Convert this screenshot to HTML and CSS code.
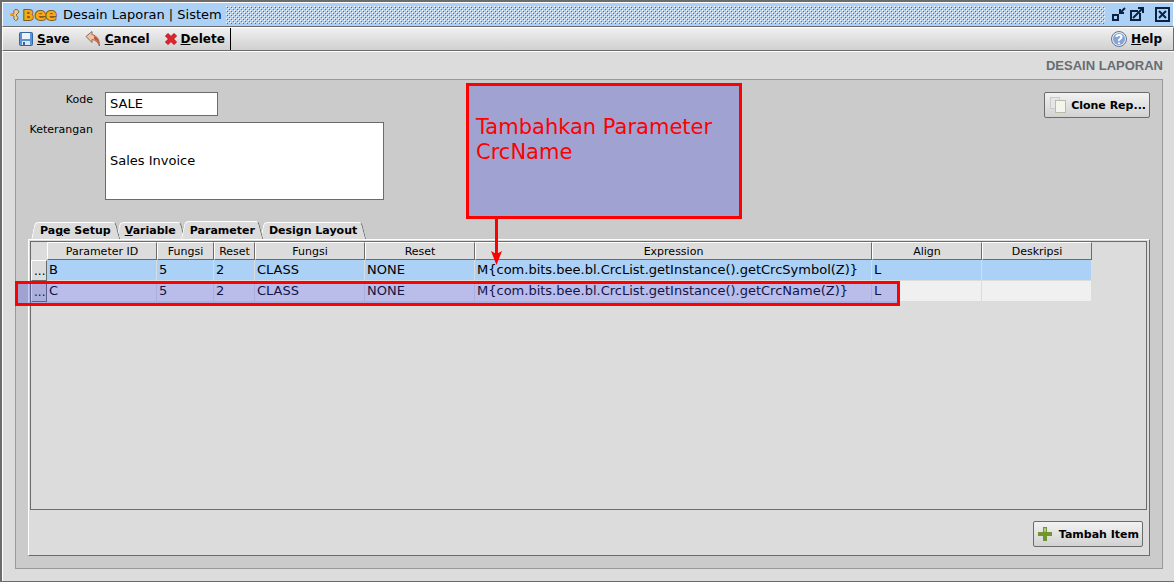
FILE: index.html
```html
<!DOCTYPE html>
<html lang="id">
<head>
  <meta charset="UTF-8">
  <meta name="viewport" content="width=device-width, initial-scale=1.0">
  <title>Desain Laporan | Sistem</title>
  <link rel="stylesheet" href="styles.css">
</head>
<body>

<div class="window">
  <header class="titlebar">
    <svg class="logo" width="52" height="18" viewBox="0 0 52 18">
      <path d="M10 6Q9 2.500 6 3.500Q4 4.500 5 7.500L1.500 8.500L5 10Q4 13.500 6.500 14.500Q9 14.500 9 11.500L7 9Z" fill="#f7c98a" stroke="#7d6a48"/>
      <path d="M1 8.500H5" stroke="#f59a12" stroke-width="2"/>
      <text class="logo-b" x="14" y="14">B</text>
      <text class="logo-e" x="26" y="14">ee</text>
    </svg>
    <h1>Desain Laporan | Sistem</h1>
    <div class="bumps"></div>
    <div class="window-buttons">
      <button aria-label="Minimize">
        <svg width="15" height="15" viewBox="0 0 15 15" fill="none" stroke="#0b2240" stroke-width="2">
          <path d="M2 8H7V13H2Z"/><path d="M14 1L9 6M9 2V6H13"/>
        </svg>
      </button>
      <button aria-label="Maximize">
        <svg width="15" height="15" viewBox="0 0 15 15" fill="none" stroke="#0b2240" stroke-width="2">
          <path d="M9 4H2V13H11V6"/><path d="M4 11L13 2M9 1H14V6"/>
        </svg>
      </button>
      <button class="close" aria-label="Close">
        <svg width="15" height="15" viewBox="0 0 15 15" fill="none" stroke="#0b2240" stroke-width="2">
          <path d="M1 1H14V14H1Z"/><path d="M4 4L11 11M11 4L4 11"/>
        </svg>
      </button>
    </div>
  </header>

  <nav class="toolbar">
    <div class="tools">
      <button>
        <svg width="14" height="14" viewBox="0 0 14 14">
          <rect x="0.500" y="0.500" width="13" height="13" rx="1" fill="#5a94d6" stroke="#3465a4"/>
          <rect x="3" y="1" width="8" height="6" fill="#eef3fa"/>
          <rect x="3" y="9" width="8" height="4" fill="#dfe5ec"/>
          <rect x="4" y="10" width="2" height="3" fill="#3465a4"/>
        </svg>
        <span><u>S</u>ave</span>
      </button>
      <button>
        <svg width="16" height="16" viewBox="0 0 16 16">
          <path d="M1 5.500L7 0.500V3.500Q14.500 5 14.500 15Q12 9 7 8.500V11.500Z" fill="#f0c3a4" stroke="#8a6a5a"/>
          <path d="M9 5Q14 7 14 13Q12 9 9 8Z" fill="#c9502c"/>
        </svg>
        <span><u>C</u>ancel</span>
      </button>
      <button>
        <svg width="12" height="12" viewBox="0 0 12 12">
          <path d="M3 0.500L6 3.500L9 0.500L11.500 3L8.500 6L11.500 9L9 11.500L6 8.500L3 11.500L0.500 9L3.500 6L0.500 3Z" fill="#e0242c" stroke="#b5121b"/>
        </svg>
        <span><u>D</u>elete</span>
      </button>
    </div>
    <button class="help">
      <svg width="16" height="16" viewBox="0 0 16 16">
        <circle cx="8" cy="8" r="7.500" fill="#e6ebf3" stroke="#66758f"/>
        <circle cx="8" cy="8" r="6" fill="#86a5d6"/>
        <path d="M5.500 6Q5.500 4 8 4T10.500 6Q10.500 7 9 8T8 10M8 11.500V13" fill="none" stroke="#fff" stroke-width="2"/>
      </svg>
      <span><u>H</u>elp</span>
    </button>
  </nav>

  <main>
    <h2>DESAIN LAPORAN</h2>

    <section class="panel">
      <div class="top">
        <form class="form">
          <label for="kode">Kode</label>
          <input type="text" id="kode" value="SALE">
          <label for="keterangan">Keterangan</label>
          <input type="text" id="keterangan" value="Sales Invoice">
        </form>
        <button class="btn">
          <svg width="18" height="16" viewBox="0 0 18 16">
            <rect x="1.500" y="0.500" width="9" height="11" fill="#e6e6e6" stroke="#c9cbc6"/>
            <rect x="6.500" y="3.500" width="10" height="12" fill="#f4f6ee" stroke="#b9bda6"/>
          </svg>
          Clone Rep...
        </button>
      </div>

      <div class="tabs" role="tablist">
        <button class="tab" role="tab"><span>Pa<u>g</u>e Setup</span></button>
        <button class="tab" role="tab"><span><u>V</u>ariable</span></button>
        <button class="tab active" role="tab" aria-selected="true"><span>Parameter</span></button>
        <button class="tab" role="tab"><span>Design Layout</span></button>
      </div>

      <div class="tab-body">
        <div class="scroll">
          <table>
            <colgroup>
              <col class="c-row"><col class="c-mid"><col class="c-fungsi"><col class="c-reset"><col class="c-mid">
              <col class="c-mid"><col class="c-expr"><col class="c-mid"><col class="c-mid">
            </colgroup>
            <thead>
              <tr>
                <td></td>
                <th>Parameter ID</th>
                <th>Fungsi</th>
                <th>Reset</th>
                <th>Fungsi</th>
                <th>Reset</th>
                <th>Expression</th>
                <th>Align</th>
                <th>Deskripsi</th>
              </tr>
            </thead>
            <tbody>
              <tr class="selected">
                <td class="row-head">...</td>
                <td>B</td>
                <td>5</td>
                <td>2</td>
                <td>CLASS</td>
                <td>NONE</td>
                <td>M{com.bits.bee.bl.CrcList.getInstance().getCrcSymbol(Z)}</td>
                <td>L</td>
                <td></td>
              </tr>
              <tr>
                <td class="row-head">...</td>
                <td>C</td>
                <td>5</td>
                <td>2</td>
                <td>CLASS</td>
                <td>NONE</td>
                <td>M{com.bits.bee.bl.CrcList.getInstance().getCrcName(Z)}</td>
                <td>L</td>
                <td></td>
              </tr>
            </tbody>
          </table>
        </div>
        <button class="btn">
          <svg width="14" height="14" viewBox="0 0 14 14">
            <path d="M5 0H9V5H14V9H9V14H5V9H0V5H5Z" fill="#73952f"/>
            <path d="M6.500 1.500H7.500V4.500H6.500Z" fill="none" stroke="#b9cf8a"/>
          </svg>
          Tambah Item
        </button>
      </div>

      <div class="note">Tambahkan Parameter CrcName</div>
      <svg class="arrow" width="12" height="48" viewBox="0 0 12 48">
        <path d="M4 0H7V36H4Z" fill="#f00"/>
        <path d="M0 33L5.500 36L11 33L5.500 47Z" fill="#f00"/>
      </svg>
      <div class="highlight"></div>
    </section>
  </main>
</div>

</body>
</html>
```
FILE: styles.css
```css
* {
  box-sizing: border-box;
}

body {
  margin: 0;
  font-family: "DejaVu Sans", Verdana, sans-serif;
  font-size: 11px;
  color: #000;
}

button {
  display: flex;
  align-items: center;
  margin: 0;
  padding: 0;
  border: none;
  background: none;
  font: bold 11px "DejaVu Sans", Verdana, sans-serif;
  color: #000;
  white-space: nowrap;
}

.window {
  display: flex;
  flex-direction: column;
  min-height: 100vh;
  background-color: #dcdcdc;
  border: 1px solid #6b6b6b;
  border-width: 2px 0 1px 2px;
}

/* title bar */
.titlebar {
  display: flex;
  align-items: center;
  height: 25px;
  padding: 0 3px 0 6px;
  background-color: #abd1f7;
  border: 1px solid #fff;
  border-bottom-color: #6b6b6b;
}

.logo {
  overflow: visible;
}

.logo text {
  font-family: "DejaVu Sans", Verdana, sans-serif;
  font-weight: bold;
  fill: #fba919;
  stroke: #7d5f20;
  stroke-width: 2px;
  stroke-linejoin: round;
  paint-order: stroke;
}

.logo-b {
  font-size: 14px;
}

.logo-e {
  font-size: 16px;
}

.titlebar h1 {
  margin: 0 4px 0 2px;
  font-size: 13px;
  font-weight: normal;
  white-space: nowrap;
}

.bumps {
  flex: 1;
  height: 18px;
  background-image:
    conic-gradient(at 1px 1px, transparent 75%, #3d6fa8 0),
    conic-gradient(at 1px 1px, transparent 75%, #3d6fa8 0),
    conic-gradient(at 1px 1px, transparent 75%, #fff 0),
    conic-gradient(at 1px 1px, transparent 75%, #fff 0);
  background-size: 4px 4px;
  background-position: 1px 1px, 3px 3px, 0 0, 2px 2px;
}

.window-buttons {
  display: flex;
  gap: 3px;
  margin-left: 6px;
}

.window-buttons .close {
  margin-left: 8px;
}

/* toolbar */
.toolbar {
  display: flex;
  justify-content: space-between;
  height: 24px;
  border: 1px solid #fff;
  border-right-color: #6b6b6b;
  border-bottom-color: #6b6b6b;
  background-image: linear-gradient(#f0f0f0, #d0d0d0);
}

.tools {
  display: flex;
  gap: 15px;
  padding: 0 5px 0 16px;
  border-right: 1px solid #000;
}

.toolbar button {
  gap: 4px;
  font-size: 12px;
}

.help {
  padding-right: 11px;
}

/* content */
main {
  display: flex;
  flex-direction: column;
  flex: 1;
  padding: 0 11px 12px 12px;
  border-top: 1px solid #fff;
  border-left: 1px solid #fff;
}

h2 {
  margin: 0;
  font: bold 13px/27px "Liberation Sans", Arial, sans-serif;
  text-align: right;
  color: #666d73;
}

.panel {
  position: relative;
  display: flex;
  flex-direction: column;
  flex: 1;
  padding: 12px;
  background-color: #cbcbcb;
  border: 1px solid #999;
}

.top {
  display: flex;
  justify-content: space-between;
  align-items: flex-start;
}

.form {
  display: grid;
  grid-template-columns: 65px 279px;
  gap: 6px 12px;
}

.form label {
  line-height: 16px;
  text-align: right;
}

.form input {
  height: 24px;
  padding: 0 4px 1px;
  border: 1px solid #6b6b6b;
  border-radius: 0;
  background-color: #fff;
  font: 13px "DejaVu Sans", Verdana, sans-serif;
  color: #000;
}

#kode {
  width: 113px;
}

#keterangan {
  height: 78px;
}

.btn {
  height: 26px;
  gap: 4px;
  padding: 0 3px 0 4px;
  border: 1px solid #6b6b6b;
  border-radius: 2px;
  background-image: linear-gradient(#f2f2f2, #d2d2d2);
}

/* tabs */
.tabs {
  display: flex;
  align-items: flex-end;
  margin-top: 21px;
  padding-left: 3px;
}

.tab {
  position: relative;
  z-index: 2;
  height: 17px;
  padding: 0 5px 0 9px;
}

.tab:first-child {
  z-index: 3;
}

.tab:last-child {
  z-index: 1;
}

.tab.active {
  z-index: 4;
  height: 18px;
}

.tab span {
  position: relative;
  z-index: 1;
}

.tab::before,
.tab::after {
  content: "";
  position: absolute;
  top: 0;
  bottom: 0;
  background-color: #dcdcdc;
  border-top: 1px solid #fff;
}

.tab::before {
  left: 2px;
  right: 50%;
  border-left: 1px solid #fff;
  border-top-left-radius: 4px;
  transform: skewX(-12deg);
}

.tab::after {
  left: 40%;
  right: -2px;
  border-right: 1px solid #6b6b6b;
  border-top-right-radius: 4px;
  transform: skewX(14deg);
}

.tab-body {
  display: flex;
  flex-direction: column;
  align-items: flex-end;
  flex: 1;
  padding: 1px 2px 8px 1px;
  background-color: #dcdcdc;
  border: 1px solid #fff;
  border-right-color: #6b6b6b;
  border-bottom-color: #6b6b6b;
}

.tab-body .btn {
  gap: 7px;
  margin: 11px 4px 0 0;
}

.scroll {
  flex: 1;
  align-self: stretch;
  border: 1px solid #6b6b6b;
}

/* parameter table */
table {
  table-layout: fixed;
  width: 1061px;
  border-collapse: separate;
  border-spacing: 0;
}

.c-row { width: 16px; }
.c-mid { width: 110px; }
.c-fungsi { width: 57px; }
.c-reset { width: 41px; }
.c-expr { width: 397px; }

th {
  height: 18px;
  padding: 0;
  border: 1px solid #fff;
  border-right-color: #6b6b6b;
  border-bottom-color: #6b6b6b;
  font-size: 11px;
  font-weight: normal;
}

tbody td {
  height: 21px;
  padding: 0 0 0 2px;
  border-right: 1px solid #dcdcdc;
  border-bottom: 1px solid #dcdcdc;
  background-color: #f0f0f0;
  font-size: 13px;
  line-height: 16px;
  white-space: nowrap;
}

.selected td {
  background-color: #abd1f7;
}

tbody .row-head {
  border: 1px solid #fff;
  border-right-color: #6b6b6b;
  border-bottom-color: #6b6b6b;
  background-color: #dcdcdc;
  font-size: 12px;
}

/* callout over the form */
.note {
  position: absolute;
  top: 3px;
  left: 450px;
  z-index: 5;
  width: 276px;
  height: 136px;
  padding: 29px 7px;
  border: 3px solid #f00;
  background-color: #a0a3d2;
  font-size: 21px;
  line-height: 25px;
  color: #f00;
}

.arrow {
  position: absolute;
  top: 138px;
  left: 475px;
  z-index: 5;
}

.highlight {
  position: absolute;
  top: 201px;
  left: -1px;
  z-index: 5;
  width: 885px;
  height: 25px;
  border: 3px solid #f00;
  background-color: rgba(62, 68, 222, 0.3);
}
```
